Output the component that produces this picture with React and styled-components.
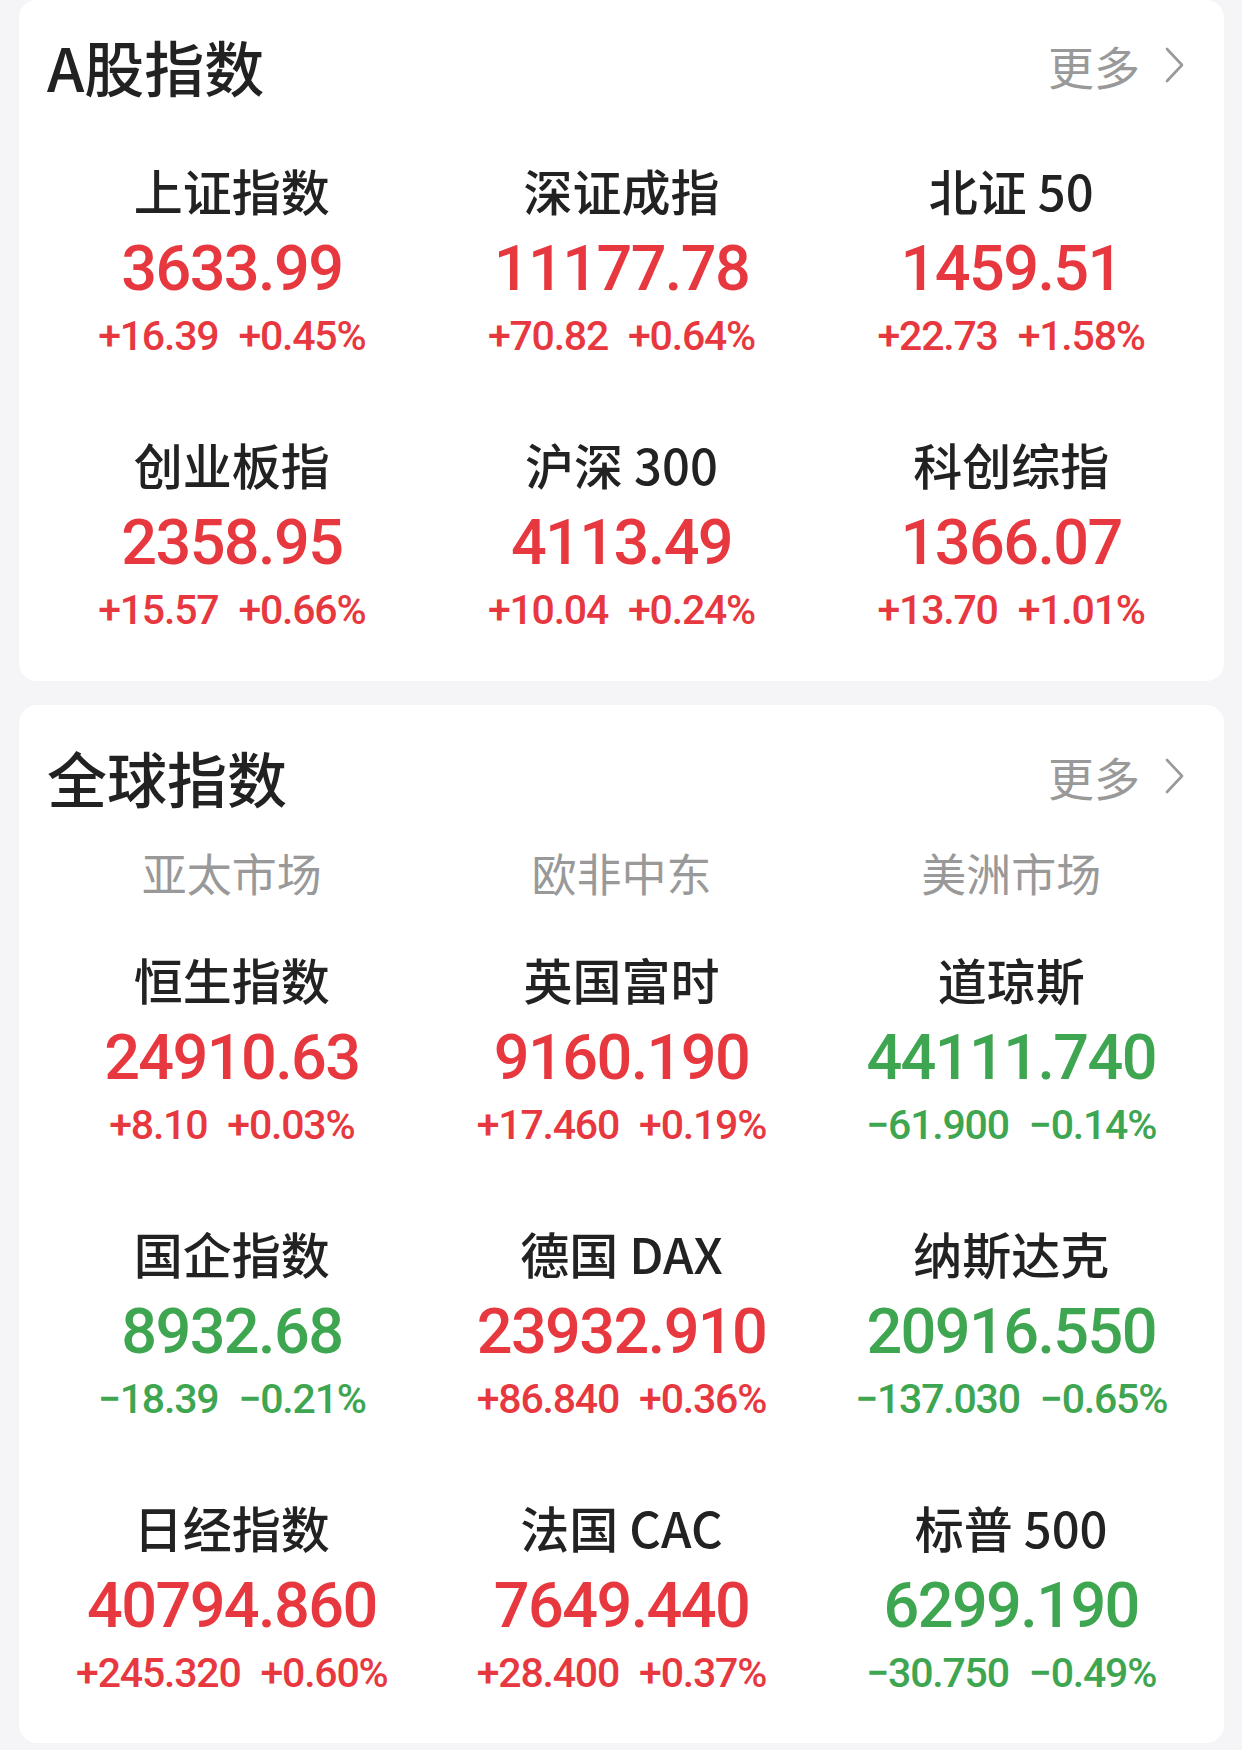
import styled, { createGlobalStyle } from "styled-components";

const GlobalStyle = createGlobalStyle`
  html, body {
    margin: 0;
    padding: 0;
    background: #f5f5f7;
  }
  body {
    font-family: "Noto Sans CJK SC", "Noto Sans", sans-serif;
  }
`;

const RED = "#e8383f";
const GREEN = "#3ea550";

const Page = styled.div`
  width: 1242px;
  min-height: 1750px;
  padding: 0 18px 0 19px;
  box-sizing: border-box;
  display: flex;
  flex-direction: column;
  gap: 24px;
`;

const Card = styled.div`
  background: #fff;
  border-radius: 18px;
  padding: ${(p) => p.$pad};
`;

const Header = styled.div`
  display: flex;
  align-items: center;
  justify-content: space-between;
  height: 70px;
  padding: 0 38px 0 28px;
`;

const Title = styled.div`
  font-size: 60px;
  font-weight: 500;
  color: #222;
`;

const More = styled.div`
  display: flex;
  align-items: center;
  gap: 24px;
  font-size: 46px;
  color: #999;
`;

const Tabs = styled.div`
  display: grid;
  grid-template-columns: repeat(3, 1fr);
  margin-top: 32px;
  padding: 0 18px;
`;

const Tab = styled.div`
  text-align: center;
  font-size: 45px;
  line-height: 60px;
  color: #999;
`;

const Grid = styled.div`
  display: grid;
  grid-template-columns: repeat(3, 1fr);
  row-gap: 73px;
  padding: 0 18px;
  margin-top: ${(p) => p.$top};
`;

const Cell = styled.div`
  display: flex;
  flex-direction: column;
  align-items: center;
`;

const Name = styled.div`
  font-size: 49px;
  line-height: 60px;
  font-weight: 500;
  color: #222;
  white-space: nowrap;
`;

const Value = styled.div`
  margin-top: 9px;
  font-family: Roboto, "Noto Sans", sans-serif;
  font-size: 63px;
  line-height: 80px;
  font-weight: 500;
  letter-spacing: -1.6px;
  color: ${(p) => (p.$up ? RED : GREEN)};
`;

const Change = styled.div`
  margin-top: 2px;
  display: flex;
  gap: 20px;
  font-family: Roboto, "Noto Sans", sans-serif;
  font-size: 41px;
  line-height: 50px;
  font-weight: 500;
  letter-spacing: -1.2px;
  color: ${(p) => (p.$up ? RED : GREEN)};
`;

const Chevron = () => (
  <svg width="22" height="38" viewBox="0 0 22 38" fill="none">
    <path d="M3 3 L18 19 L3 35" stroke="#999" strokeWidth="2.6" strokeLinecap="round" strokeLinejoin="round" />
  </svg>
);

const aShares = [
  ["上证指数", "3633.99", "+16.39", "+0.45%"],
  ["深证成指", "11177.78", "+70.82", "+0.64%"],
  ["北证 50", "1459.51", "+22.73", "+1.58%"],
  ["创业板指", "2358.95", "+15.57", "+0.66%"],
  ["沪深 300", "4113.49", "+10.04", "+0.24%"],
  ["科创综指", "1366.07", "+13.70", "+1.01%"],
];

const globalIdx = [
  ["恒生指数", "24910.63", "+8.10", "+0.03%"],
  ["英国富时", "9160.190", "+17.460", "+0.19%"],
  ["道琼斯", "44111.740", "−61.900", "−0.14%"],
  ["国企指数", "8932.68", "−18.39", "−0.21%"],
  ["德国 DAX", "23932.910", "+86.840", "+0.36%"],
  ["纳斯达克", "20916.550", "−137.030", "−0.65%"],
  ["日经指数", "40794.860", "+245.320", "+0.60%"],
  ["法国 CAC", "7649.440", "+28.400", "+0.37%"],
  ["标普 500", "6299.190", "−30.750", "−0.49%"],
];

const IndexCell = ({ item }) => {
  const [name, value, diff, pct] = item;
  const up = !diff.startsWith("−");
  return (
    <Cell>
      <Name>{name}</Name>
      <Value $up={up}>{value}</Value>
      <Change $up={up}>
        <span>{diff}</span>
        <span>{pct}</span>
      </Change>
    </Cell>
  );
};

const SectionHeader = ({ title }) => (
  <Header>
    <Title>{title}</Title>
    <More>
      <span>更多</span>
      <Chevron />
    </More>
  </Header>
);

export default function App() {
  return (
    <>
      <GlobalStyle />
      <Page>
        <Card $pad="30px 0 46px">
          <SectionHeader title="A股指数" />
          <Grid $top="60px">
            {aShares.map((it) => (
              <IndexCell key={it[0]} item={it} />
            ))}
          </Grid>
        </Card>
        <Card $pad="36px 0 45px">
          <SectionHeader title="全球指数" />
          <Tabs>
            <Tab>亚太市场</Tab>
            <Tab>欧非中东</Tab>
            <Tab>美洲市场</Tab>
          </Tabs>
          <Grid $top="46px">
            {globalIdx.map((it) => (
              <IndexCell key={it[0]} item={it} />
            ))}
          </Grid>
        </Card>
      </Page>
    </>
  );
}
